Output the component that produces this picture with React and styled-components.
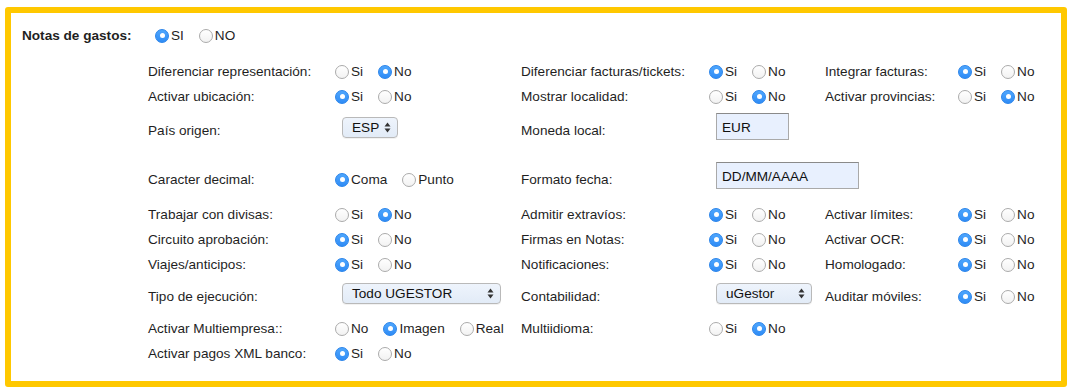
import React from 'react'
import styled, { createGlobalStyle, css } from 'styled-components'

const GlobalStyle = createGlobalStyle`
  body {
    margin: 0;
    background: #fff;
    font-family: 'Liberation Sans', Arial, sans-serif;
    font-size: 13.6px;
    color: #1f1f1f;
  }
`

// each settings row: label/control pairs, three pairs max
const yn = value => ({ type: 'radio', options: ['Si', 'No'], value })

const rows = [
  {
    top: 0,
    cells: [
      ['Diferenciar representación:', yn('No')],
      ['Diferenciar facturas/tickets:', yn('Si')],
      ['Integrar facturas:', yn('Si')]
    ]
  },
  {
    top: 0,
    cells: [
      ['Activar ubicación:', yn('Si')],
      ['Mostrar localidad:', yn('No')],
      ['Activar provincias:', yn('No')]
    ]
  },
  {
    top: 9,
    cells: [
      ['País origen:', { type: 'select', value: 'ESP', width: 56 }],
      ['Moneda local:', { type: 'input', value: 'EUR', width: 73 }]
    ]
  },
  {
    top: 24,
    cells: [
      [
        'Caracter decimal:',
        { type: 'radio', options: ['Coma', 'Punto'], value: 'Coma' }
      ],
      ['Formato fecha:', { type: 'input', value: 'DD/MM/AAAA', width: 143 }]
    ]
  },
  {
    top: 10,
    cells: [
      ['Trabajar con divisas:', yn('No')],
      ['Admitir extravíos:', yn('Si')],
      ['Activar límites:', yn('Si')]
    ]
  },
  {
    top: 0,
    cells: [
      ['Circuito aprobación:', yn('Si')],
      ['Firmas en Notas:', yn('Si')],
      ['Activar OCR:', yn('Si')]
    ]
  },
  {
    top: 0,
    cells: [
      ['Viajes/anticipos:', yn('Si')],
      ['Notificaciones:', yn('Si')],
      ['Homologado:', yn('Si')]
    ]
  },
  {
    top: 7,
    cells: [
      [
        'Tipo de ejecución:',
        { type: 'select', value: 'Todo UGESTOR', width: 159 }
      ],
      ['Contabilidad:', { type: 'select', value: 'uGestor', width: 96 }],
      ['Auditar móviles:', yn('Si')]
    ]
  },
  {
    top: 7,
    cells: [
      [
        'Activar Multiempresa::',
        {
          type: 'radio',
          options: ['No', 'Imagen', 'Real'],
          value: 'Imagen'
        }
      ],
      ['Multiidioma:', yn('No')]
    ]
  },
  {
    top: 0,
    cells: [['Activar pagos XML banco:', yn('Si')]]
  }
]

function RadioGroup({ options, value }) {
  return (
    <Options>
      {options.map(opt => (
        <Option key={opt}>
          <Dot $checked={opt === value} />
          {opt}
        </Option>
      ))}
    </Options>
  )
}

const UpDown = () => (
  <svg width="7" height="11" viewBox="0 0 7 11">
    <path d="M3.5 0.5 L6.5 4.5 L0.5 4.5 Z" fill="#333" />
    <path d="M3.5 10.5 L6.5 6.5 L0.5 6.5 Z" fill="#333" />
  </svg>
)

function Control({ field }) {
  if (field.type === 'radio') return <RadioGroup {...field} />
  if (field.type === 'select')
    return (
      <SelectBox $width={field.width}>
        <span>{field.value}</span>
        <UpDown />
      </SelectBox>
    )
  return <TextInput $width={field.width} readOnly defaultValue={field.value} />
}

export default function App() {
  return (
    <>
      <GlobalStyle />
      <Frame>
        <Header>
          <SectionLabel>Notas de gastos:</SectionLabel>
          <RadioGroup options={['SI', 'NO']} value="SI" />
        </Header>
        <Settings>
          {rows.map((row, i) => (
            <Row key={i} $top={row.top}>
              {row.cells.map(([label, field]) => (
                <React.Fragment key={label}>
                  <Label>{label}</Label>
                  <Cell>
                    <Control field={field} />
                  </Cell>
                </React.Fragment>
              ))}
            </Row>
          ))}
        </Settings>
      </Frame>
    </>
  )
}

const Frame = styled.section`
  box-sizing: border-box;
  width: 1062px;
  height: 380px;
  margin: 7px 0 0 5px;
  border: 6px solid #ffc800;
  border-radius: 3px;
  padding-top: 10px;
`

const Header = styled.div`
  display: flex;
  align-items: center;
  height: 25px;
  padding-left: 11px;
`

const SectionLabel = styled.span`
  width: 133px;
  font-weight: bold;
`

const Settings = styled.div`
  margin-top: 11px;
  padding-left: 137px;
`

const Row = styled.div`
  display: grid;
  grid-template-columns: 187px 186px 188px 116px 133px 1fr;
  grid-template-rows: 25px;
  align-items: center;
  height: 25px;
  margin-top: ${p => p.$top}px;
`

const Label = styled.span`
  white-space: nowrap;
`

const Cell = styled.div`
  display: flex;
  align-items: center;
  white-space: nowrap;
`

const Options = styled.div`
  display: flex;
  align-items: center;
`

const Option = styled.label`
  display: inline-flex;
  align-items: center;
  gap: 2px;
  margin-right: 15px;
`

const Dot = styled.span`
  position: relative;
  box-sizing: border-box;
  width: 14px;
  height: 14px;
  border-radius: 50%;
  ${p =>
    p.$checked
      ? css`
          background: linear-gradient(#4ea6fd, #2f8cf6);
          border: 1px solid #2a84ea;
          &::after {
            content: '';
            position: absolute;
            left: 50%;
            top: 50%;
            width: 5px;
            height: 5px;
            margin: -2.5px 0 0 -2.5px;
            border-radius: 50%;
            background: #fff;
          }
        `
      : css`
          background: linear-gradient(#ffffff, #f2f2f2);
          border: 1px solid #ababab;
        `}
`

const SelectBox = styled.div`
  box-sizing: border-box;
  display: flex;
  align-items: center;
  justify-content: space-between;
  width: ${p => p.$width}px;
  height: 21px;
  margin: 0 0 6px 7px;
  padding: 0 6px 0 9px;
  border: 1px solid #b9b9b9;
  border-radius: 4px;
  background: linear-gradient(#eef4fc, #e2ebf7);
  box-shadow: 0 1px 0 rgba(0, 0, 0, 0.05);
  color: #111;
`

const TextInput = styled.input`
  box-sizing: border-box;
  width: ${p => p.$width}px;
  height: 27px;
  margin: 0 0 8px 7px;
  padding: 2px 0 0 5px;
  border: 1px solid #a9a9a9;
  border-top-color: #8a8a8a;
  background: #e8f0fe;
  font-family: 'Liberation Sans', Arial, sans-serif;
  font-size: 13.6px;
  color: #111;
  outline: none;
`
